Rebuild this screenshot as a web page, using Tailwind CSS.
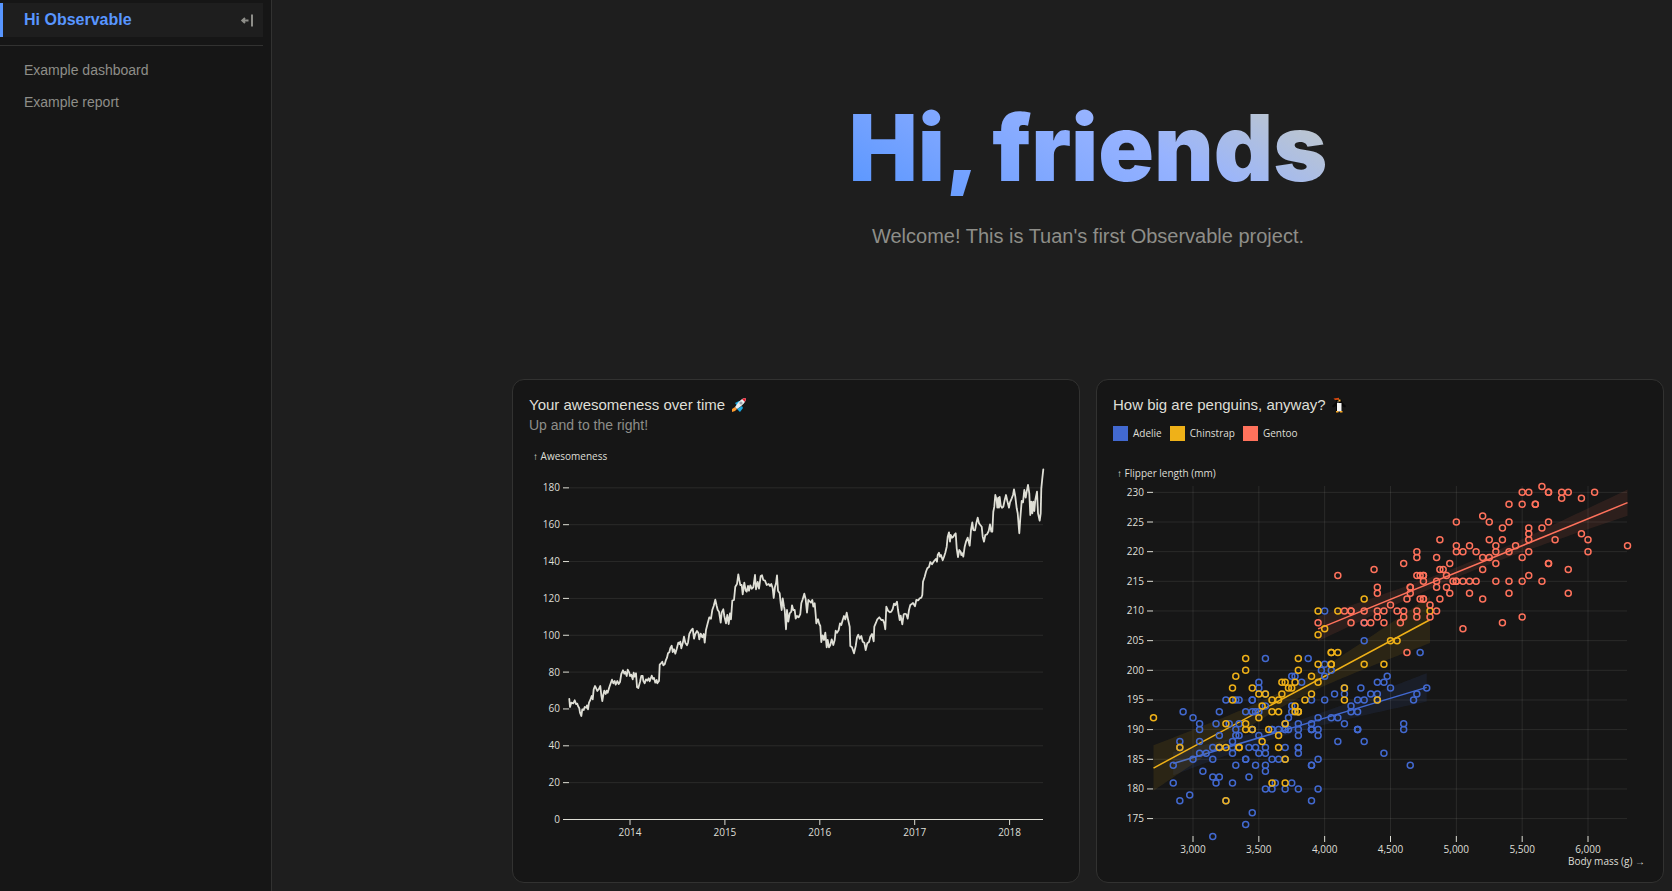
<!DOCTYPE html>
<html lang="en">
<head>
<meta charset="utf-8">
<meta name="viewport" content="width=device-width, initial-scale=1">
<title>Hi Observable</title>
<script src="https://cdn.jsdelivr.net/npm/@tailwindcss/browser@4"></script>
</head>
<body class="flex min-h-screen bg-[#1e1e1e] font-['Liberation_Sans',Arial,sans-serif] text-[#dfdfd6]">
<nav class="w-68 shrink-0 border-r border-[#323231] bg-[#161616] pr-2 pt-[3px]" aria-label="Pages">
  <div class="flex h-[34px] items-center justify-between border-l-[3px] border-[#5896ff] bg-[#1e1e1e] pl-[21px] pr-2">
    <a href="#" class="text-base leading-6 font-bold text-[#5896ff]">Hi Observable</a>
    <button type="button" aria-label="Toggle sidebar" class="flex size-4 items-center justify-center text-[#8e8e89]">
      <svg width="16" height="16" viewBox="0 0 16 16" fill="none" stroke="currentColor" stroke-width="2"><path d="M9.500 8.500H3.500M6 6 3.300 8.500 6 11M13 2.500v12"/></svg>
    </button>
  </div>
  <hr class="mt-2 border-[#323231]">
  <ul class="mt-2 text-sm leading-8 text-[#8e8e89]">
    <li><a href="#" class="block pl-6">Example dashboard</a></li>
    <li><a href="#" class="block pl-6">Example report</a></li>
  </ul>
</nav>
<main class="min-w-0 flex-1 pr-2 pl-60">
  <header class="flex flex-col items-center pt-25 pb-[129px] text-center">
    <h1 class="bg-[linear-gradient(30deg,#5896ff,#7ba5ff_30%,#97b3ff_60%,#c2c9c8_95%)] bg-clip-text font-['Inter',sans-serif] text-[92px] leading-24 font-black text-transparent">Hi, friends</h1>
    <p class="mt-[26px] text-xl leading-7 text-[#8e8e89]">Welcome! This is Tuan's first Observable project.</p>
  </header>
  <div class="grid grid-cols-2 gap-4 pb-4">
    <section class="rounded-xl border border-[#323231] bg-[#161616] px-4 pt-[15px] pb-4">
      <h2 class="flex items-center gap-1.5 text-[15px] leading-5">Your awesomeness over time
        <svg width="16" height="16" viewBox="0 0 16 16" role="img" aria-label="rocket"><path d="M4 6 8 4l2 1-3 5zM6 12l5-3 1 2-3 4z" fill="#19a7e0"/><path d="M4 10 1 12v3l3-1 2-2z" fill="#ff9a2e"/><path d="M15 1c-4 0-7 3-11 9l2 2c6-4 9-7 9-11z" fill="#eceff1"/><path d="M11 2l4-1-1 4z" fill="#e81224"/><circle cx="10" cy="6" r="1.6" fill="#9aa2a8"/></svg>
      </h2>
      <h3 class="text-sm leading-5 text-[#8e8e89]">Up and to the right!</h3>
      <svg id="awesome" class="mt-[11px] block w-full overflow-visible font-['Open_Sans','Noto_Sans',sans-serif] text-[10px]" viewBox="0 0 534 420" fill="currentColor" role="img" aria-label="Awesomeness by year"></svg>
    </section>
    <section class="rounded-xl border border-[#323231] bg-[#161616] px-4 pt-[15px] pb-4">
      <h2 class="flex items-center gap-[5px] text-[15px] leading-5">How big are penguins, anyway?
        <svg width="16" height="16" viewBox="0 0 16 16" role="img" aria-label="penguin"><path d="M5 2h5l1 3 4 4-1 1.500-3-1.500v5H5V9l-3 1.500L1 9l4-4z" fill="#070707"/><path d="M6 4h2v2H6z" fill="#3d3d3d"/><path d="M2.500 1.500 8 .8v2L4 3z" fill="#d9480f"/><path d="M7.500 2.500h2v2h-2z" fill="#f5b53c"/><path d="M6 6h4.500v8.500H6z" fill="#f4f4f4"/><path d="M5 14h2.500v1.500H5zM9 14h2.500v1.500H9z" fill="#f5a623"/></svg>
      </h2>
      <div class="mt-[11px] flex items-center gap-2 font-['Open_Sans','Noto_Sans',sans-serif] text-[10px] leading-[15px]">
        <span class="flex items-center gap-[5px]"><i class="size-[15px] bg-[#4269d0]"></i>Adelie</span>
        <span class="flex items-center gap-[5px]"><i class="size-[15px] bg-[#efb118]"></i>Chinstrap</span>
        <span class="flex items-center gap-[5px]"><i class="size-[15px] bg-[#ff725c]"></i>Gentoo</span>
      </div>
      <svg id="penguins" class="mt-[23px] block w-full overflow-visible font-['Open_Sans','Noto_Sans',sans-serif] text-[10px]" viewBox="0 0 534 402" fill="currentColor" role="img" aria-label="Flipper length against body mass"></svg>
    </section>
  </div>
</main>
<script>
const line = (x1, y1, x2, y2, o = 1) => `<line x1="${x1}" y1="${y1}" x2="${x2}" y2="${y2}" stroke="currentColor" stroke-opacity="${o}"/>`;
const label = (x, y, t, a = 'middle') => `<text x="${x}" y="${y}" text-anchor="${a}">${t}</text>`;

// Awesomeness over time; points are in thirds of a pixel, each run with its own origin.
const runs = [
  [0, 765, '178,207 180,231 184,218 190,220 194,211 198,222 202,221 204,228 208,235 210,248 214,258 217,238 221,240 224,231 229,233 231,226 234,238 237,218 241,210 245,198 248,208 251,178 255,168 259,176 262,183 266,178 271,168 274,195 277,213 280,195 283,182 287,192 290,182 293,188 298,172 302,160 306,149 310,160 314,153 317,164 322,153 326,162 330,156 334,132 339,121 343,131 346,125 350,138 353,119 358,128 360,138 364,134 368,148 371,128 374,140 378,130 381,172 385,174 390,156 394,138 398,138 400,152 404,160 408,148 412,152 416,145 419,154 425,137 429,147 432,144 436,158 440,150 442,160 447,153 449,104 453,100 457,95 460,106 464,103 467,92 471,83 474,70 478,67 481,55 485,47 488,66 492,58 496,71 500,57 505,38 509,42 511,35 514,55 518,40 522,20 526,38 531,46 534,38 538,12'],
  [540, 555, '3,212 8,206 12,236 16,222 21,213 25,218 28,238 32,221 37,232 41,222 44,248 48,210 53,190 58,172 63,176 67,150 71,138 76,119 80,138 83,150 87,155 92,188 95,157 100,148 103,168 108,190 112,165 116,192 120,160 123,178 127,122 132,120 136,80 141,72 145,43 148,60 151,75 155,75 158,103 163,68 167,92 170,95 174,78 177,92 181,76 185,86 190,82 195,45 198,88 203,66 207,86 212,48 216,46 220,60 225,62 230,75 236,72 240,78 244,72 248,85 251,114 255,80 258,70 261,46 264,92 269,100 272,130 275,150 278,115 282,140 284,150 288,208 291,150 295,185 299,160 304,155 306,136 310,150 314,150 317,176 321,168 326,172 331,162 334,130 338,118 343,101 347,118 351,158 355,120 359,124 363,128 367,120 370,140 374,130 377,165 379,190 384,178 388,192 391,198 394,246 398,226 402,240 406,218 410,262 413,240 417,262 421,255 425,238 430,255 434,240 437,212 441,218 446,210 450,190 454,195 458,180 462,168 466,178 470,158 474,178 479,200 481,258 486,262 492,280 497,258 501,232 505,224 509,236 514,228 518,245 523,248 527,270 532,250 537,246 541,230 546,222 551,244 553,200 558,188 562,178 568,172 574,180 579,180 583,190 586,208 589,140 594,152'],
  [870, 0, '270,712 274,710 278,702 282,686 286,690 291,680 294,705 299,735 302,722 307,748 311,718 315,716 319,718 323,731 327,705 331,690 335,687 339,684 345,694 349,675 355,676 359,670 364,668 367,660 369,620 374,605 378,590 382,580 387,576 391,561 396,568 400,562 404,556 408,552 411,560 413,540 417,533 420,545 423,540 428,556 432,545 436,533 440,515 443,485 447,472 450,500 452,480 456,488 460,485 464,478 467,475 470,520 474,546 478,525 482,530 484,540 487,535 490,545 494,515 498,500 503,488 506,500 509,512 513,465 517,442 520,465 525,466 529,445 533,428 537,445 541,450 545,455 548,485 552,500 556,480 561,478 566,468 570,448 574,470 577,470 580,410 583,395 586,360 590,375 592,398 595,368 597,398 599,366 602,392 606,398 610,395 614,375 618,360 622,378 627,398 630,382 635,370 639,360 642,343 646,365 650,400 653,415 658,475 661,430 665,378 669,382 673,345 677,368 680,350 684,330 688,355 691,420 694,380 697,415 700,380 703,408 706,375 711,350 714,415 719,437 722,415 724,340 727,310 730,283'],
];
let a = label(4, 14, '↑ Awesomeness', 'start');
for (let v = 0; v <= 180; v += 20) {
  const y = 373.5 - v * 1.8425;
  a += line(34, y, 40, y) + line(40, y, 514, y, v ? 0.1 : 1) + label(31, y + 3.5, v, 'end');
}
for (let i = 0; i < 5; i++) {
  const x = 101 + i * 94.9;
  a += line(x, 374, x, 379) + label(x, 390, 2014 + i);
}
const pts = runs.flatMap(([dx, dy, s]) => s.split(' ').map(p => { const [x, y] = p.split(',').map(Number); return `${((x + dx) / 3 - 19).toFixed(1)},${((y + dy) / 3 - 71).toFixed(1)}`; }));
a += `<polyline points="${pts.join(' ')}" fill="none" stroke="currentColor" stroke-width="1.8" stroke-linejoin="round" stroke-linecap="round"/>`;
document.getElementById('awesome').innerHTML = a;

// Penguins: flipper length in mm, then the body masses in g seen at that length.
const species = [
  ['#4269d0', '172 3150;174 3400;176 3450;178 3250 3900 2900;179 2975;180 3700 3600 3800 3950 3550;181 3750 3625 3300 2850 3175;182 3200 3150 3425;183 3550 3075;184 3325 3900 4650 2850 3900 3550 3475;185 3700 3950 3000 3150 3600 3400 3400 3650;186 3800 3300 3100 3500 3550 4450 3050;187 3800 3200 2900 3550 3800 3300 3150 3425 3475 3700;188 3300 4300 4100 2900 3050;189 3800 3200 3500 3950 3350 3325;190 3650 4250 3950 4600 3450 3450 3050 3600 3900 3700 3800 3600 3700 4250 3900 3325 3900 3725 4250;191 3800 4150 3700 3700 3350 4600 3900 3275 3050 3175;192 4050 3950 4100 3725 3000;193 3450 3475 3800 4200 2925 3200 3500 4250 3400 3750;194 4200 3750 3550;195 3250 4675 3450 3325 3900 4400 3350 4250 4000 4300 3450;196 4150 4400 3550 4700 4350 4075;197 4500 4150 4775 4275 3500;198 4400 4450 3825 3500;199 3750 3775 4000 4475;200 4050 3975;201 4000;202 3550 3875;203 4725;205 4300;208 4300;210 4000'],
  ['#efb118', '178 3250;181 3700 3600;185 3700;187 2900 3200 3350 3650 3250 3350;188 3525;189 3650;190 3575 3450 3400;191 3400 3700 3250;192 3500 2700;193 3650 3800 3800 3600 3775;194 3775 3525;195 4150 4400 3300 3600 3850 3650;196 3900 3550 3500 3675;197 3725 3750 3300 4150 3450;198 3950 3700 3675 3775;199 3900 3325;200 3400 3800;201 4050 4050 4300 4450 3950;202 3800 3400;203 4100 4050 4050;205 4550 4500;206 3950;207 4000;210 4800 3950 4100;212 4300'],
  ['#ff725c', '203 4625;207 5050;208 3950 4200 4300 4350 4450 4575 5350;209 4400 4600 4700 4800 5500;210 4150 4200 4200 4300 4400 4450 4550 4600 4700 4850;211 4500 4800;212 4625 4725 4750 4750 4875 5200;213 4400 4650 4950 5100 5400 5850;214 4400 4650 4650 4850 4925;215 4750 4850 4975 5000 5000 5050 5100 5150 5300 5400 5500 5650;216 4100 4700 4725 4750 4750 4925 5550;217 4375 4875 4900 5200 5850;218 4600 4950 5300 5700 5700;219 4700 4850 5200 5250 5500;220 4700 5000 5050 5150 5300 5400 5550 6000;221 5000 5100 5300 5450 6300;222 4875 5250 5350 5550 5750 6000;223 5550 5950;224 5350 5550 5650;225 5000 5250 5400 5700;226 5200;228 5400 5500 5600 5600;229 5800 5950;230 5500 5550 5700 5700 5800 5850 6050;231 5650'],
].map(([c, s]) => [c, s.split(';').flatMap(r => { const [f, ...m] = r.split(' ').map(Number); return m.map(k => [k, f]); })]);
const X = m => 40.5 + (m - 2700) * 0.13167, Y = f => 372.4 - (f - 172) * 5.932;
let p = label(4, 13, '↑ Flipper length (mm)', 'start') + label(532, 401, 'Body mass (g) →', 'end');
for (let f = 175; f <= 230; f += 5) p += line(34, Y(f), 40, Y(f)) + line(40, Y(f), 514, Y(f), 0.1) + label(31, Y(f) + 3.5, f, 'end');
for (let m = 3000; m <= 6000; m += 500) p += line(X(m), 372, X(m), 378) + line(X(m), 22, X(m), 372, 0.1) + label(X(m), 389, m.toLocaleString('en-US'));
// Least-squares line with its 95% confidence band.
for (const [c, d] of species) {
  const n = d.length, mx = d.reduce((s, q) => s + q[0], 0) / n, my = d.reduce((s, q) => s + q[1], 0) / n;
  const sxx = d.reduce((s, q) => s + (q[0] - mx) ** 2, 0), b = d.reduce((s, q) => s + (q[0] - mx) * (q[1] - my), 0) / sxx;
  const fit = x => my + b * (x - mx), se = Math.sqrt(d.reduce((s, q) => s + (q[1] - fit(q[0])) ** 2, 0) / (n - 2));
  const lo = Math.min(...d.map(q => q[0])), hi = Math.max(...d.map(q => q[0])), up = [], dn = [];
  for (let i = 0; i <= 60; i++) {
    const x = lo + (hi - lo) * i / 60, e = 1.98 * se * Math.sqrt(1 / n + (x - mx) ** 2 / sxx);
    up.push(`${X(x)},${Y(fit(x) + e)}`); dn.unshift(`${X(x)},${Y(fit(x) - e)}`);
  }
  p += `<polygon points="${up.concat(dn).join(' ')}" fill="${c}" fill-opacity="0.1"/><line x1="${X(lo)}" y1="${Y(fit(lo))}" x2="${X(hi)}" y2="${Y(fit(hi))}" stroke="${c}" stroke-width="1.5"/>`;
}
for (const [c, d] of species) p += `<g fill="none" stroke="${c}" stroke-width="1.5">` + d.map(([m, f]) => `<circle cx="${X(m)}" cy="${Y(f)}" r="3"/>`).join('') + '</g>';
document.getElementById('penguins').innerHTML = p;
</script>
</body>
</html>
